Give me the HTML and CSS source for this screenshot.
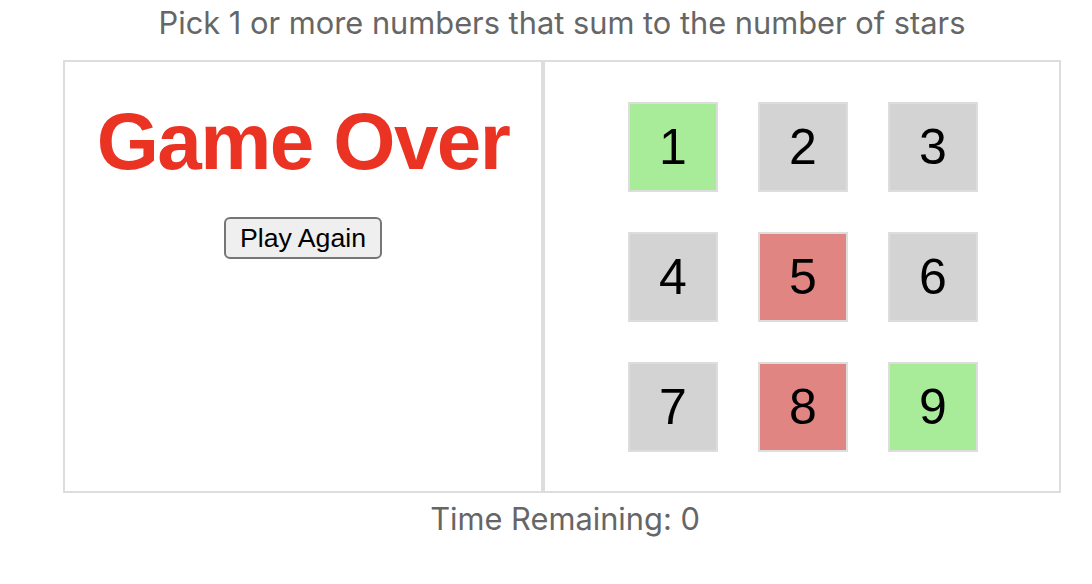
FILE: index.html
```html
<!DOCTYPE html>
<html>
<head>
<meta charset="utf-8">
<link rel="stylesheet" href="styles.css">
</head>
<body>
<div class="game">
  <div class="help">Pick 1 or more numbers that sum to the number of stars</div>
  <div class="board">
    <div class="left">
      <div class="game-done">
        <div class="message">Game Over</div>
        <button class="again">Play Again</button>
      </div>
    </div>
    <div class="right">
      <div class="numbers">
        <button class="number used">1</button>
        <button class="number available">2</button>
        <button class="number available">3</button>
        <button class="number available">4</button>
        <button class="number wrong">5</button>
        <button class="number available">6</button>
        <button class="number available">7</button>
        <button class="number wrong">8</button>
        <button class="number used">9</button>
      </div>
    </div>
  </div>
  <div class="timer">Time Remaining: 0</div>
</div>
</body>
</html>
```

FILE: styles.css
```css
html, body {
  margin: 0;
  padding: 0;
  background: #ffffff;
}

.game {
  width: 998px;
  margin-left: 63px;
}

.help {
  color: #666666;
  font-family: Inter, "Noto Sans", sans-serif;
  font-size: 30.8px;
  line-height: 40px;
  height: 40px;
  padding-top: 3px;
  margin-bottom: 17px;
  text-align: center;
}

.board {
  display: flex;
}

.left {
  box-sizing: border-box;
  width: 480px;
  border: 2px solid #dddddd;
  text-align: center;
}

.right {
  box-sizing: border-box;
  width: 518px;
  border: 2px solid #dddddd;
  padding: 40px 0 39px 2px;
  display: flex;
  justify-content: center;
}

.game-done {
  display: flex;
  flex-direction: column;
  align-items: center;
}

.message {
  margin-top: 34px;
  font-family: "Liberation Sans", Arial, sans-serif;
  font-weight: bold;
  font-size: 80px;
  line-height: 92px;
  letter-spacing: -1.6px;
  color: #ea3323;
}

.again {
  margin-top: 29px;
  box-sizing: border-box;
  width: 158px;
  height: 42px;
  padding: 0;
  border: 2px solid #767676;
  border-radius: 6px;
  background: #efefef;
  color: #000000;
  font-family: "Liberation Sans", Arial, sans-serif;
  font-size: 26.67px;
}

.numbers {
  display: grid;
  grid-template-columns: repeat(3, 90px);
  grid-auto-rows: 90px;
  gap: 40px;
}

.number {
  box-sizing: border-box;
  width: 90px;
  height: 90px;
  padding: 0;
  border: 2px solid #dddddd;
  color: #000000;
  font-family: "Liberation Sans", Arial, sans-serif;
  font-size: 50px;
}

.number.used {
  background: #a8ec9a;
}

.number.wrong {
  background: #e08581;
}

.number.available {
  background: #d3d3d3;
}

.timer {
  color: #666666;
  font-family: Inter, "Noto Sans", sans-serif;
  font-size: 30.8px;
  line-height: 40px;
  margin-top: 6px;
  margin-left: 6px;
  text-align: center;
}
```
